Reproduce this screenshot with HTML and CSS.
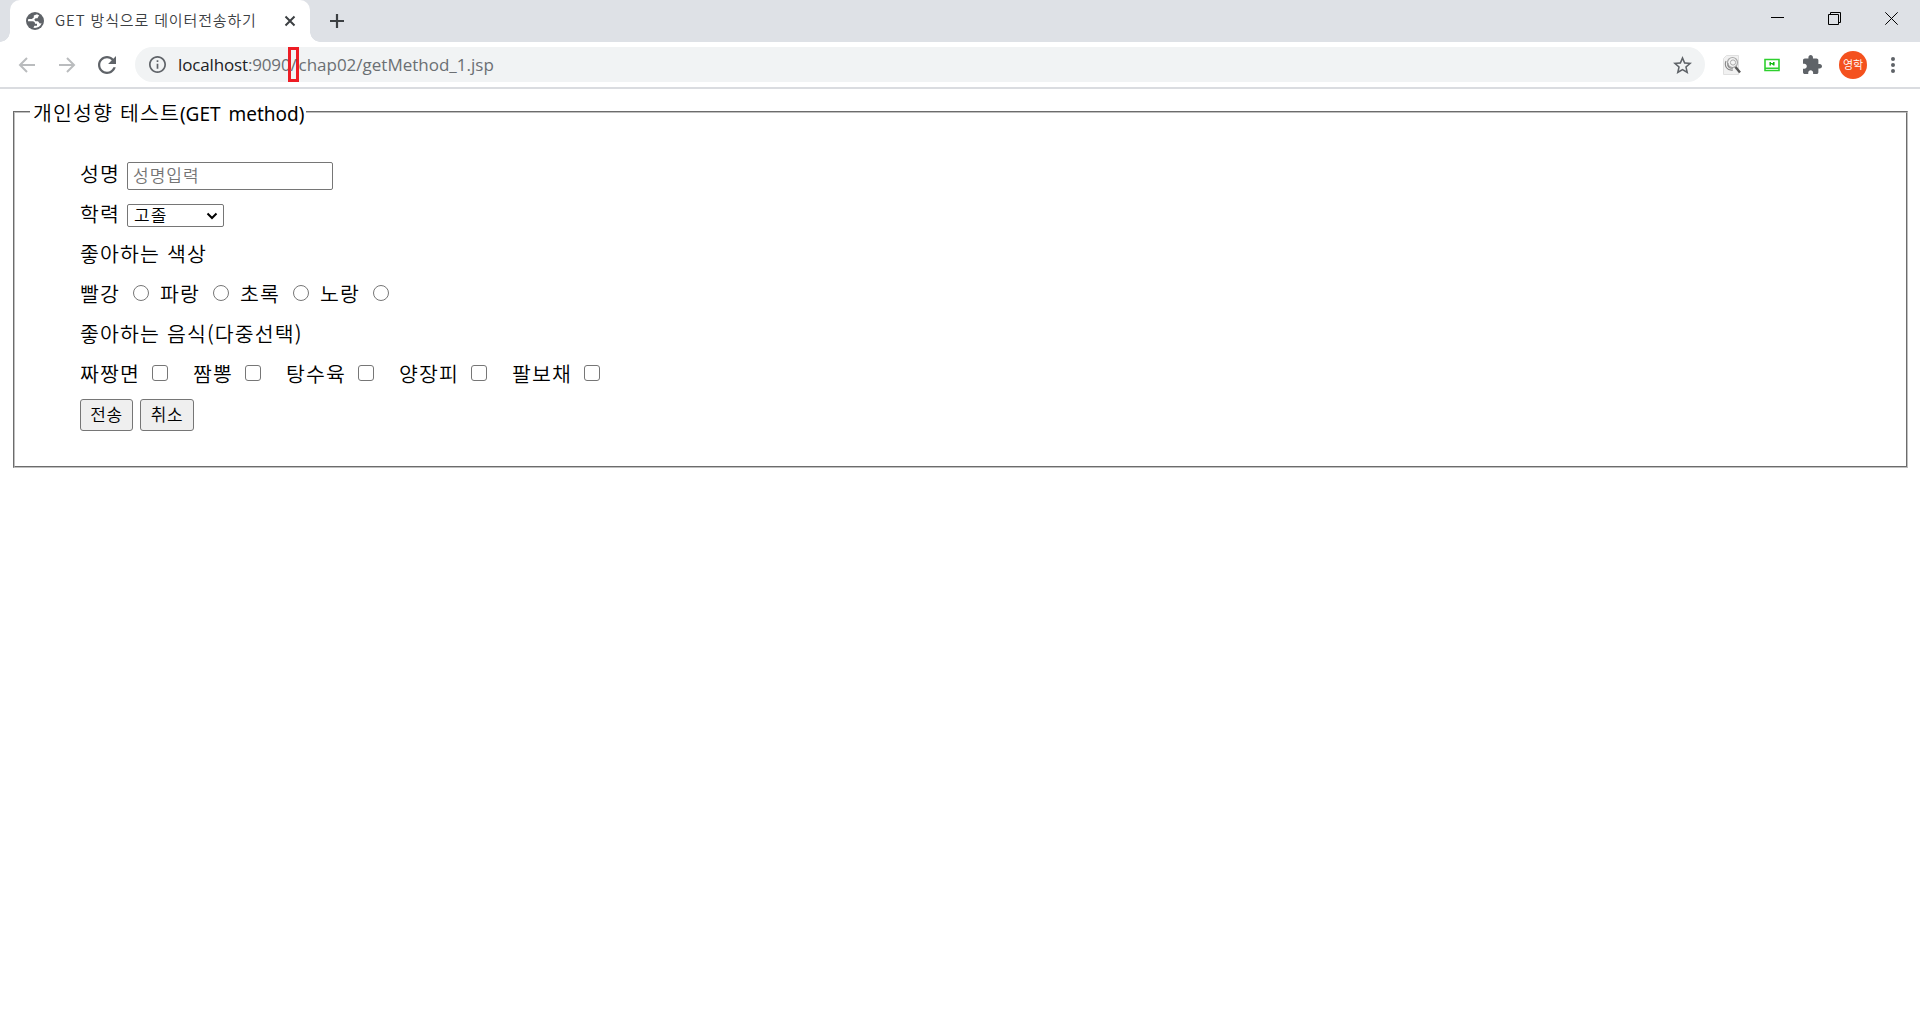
FILE: index.html
```html
<!DOCTYPE html>
<html lang="ko">
<head>
<meta charset="utf-8">
<title>GET 방식으로 데이터전송하기</title>
<link rel="stylesheet" href="styles.css">
</head>
<body>
<header class="browser">
  <div class="tabstrip">
    <div class="tab">
      <svg class="globe" width="18" height="18" viewBox="0 0 18 18"><circle cx="9" cy="9" r="9" fill="#5f6368"/><path fill="#fff" d="M11 2.300L7.800 3.600V5.500L5.800 7H2.300C2 8 2 8.600 2 9.200h4.500c1.800 0 2.500 1 2.500 2.600h2v2H8.400l-1 2c3.700.7 7-1.200 8.200-4.500l-1.800.2-1.800-2.300H9.500L8.300 7.700l1.200-1.400h2l.7-1.600 1-1.300z"/></svg>
      <span class="tab-title">GET 방식으로 데이터전송하기</span>
      <svg class="tab-close" width="12" height="12" viewBox="0 0 12 12"><path d="M1.500 1.500l9 9m0-9l-9 9" stroke="#3c4043" stroke-width="2"/></svg>
    </div>
    <svg class="new-tab" width="16" height="16" viewBox="0 0 16 16"><path d="M8 1v14M1 8h14" stroke="#3c4043" stroke-width="2.200"/></svg>
    <div class="window-controls">
      <svg width="13" height="13" viewBox="0 0 13 13"><path d="M0 5.500h13" stroke="#000"/></svg>
      <svg width="13" height="13" viewBox="0 0 13 13"><path d="M.5 2.500h10v10H.500zM2.500 2.500v-2h10v10h-2" fill="none" stroke="#000"/></svg>
      <svg width="13" height="13" viewBox="0 0 13 13"><path d="M.3.300l12.400 12.400m0-12.400L.3 12.700" stroke="#000"/></svg>
    </div>
  </div>
  <div class="toolbar">
    <svg class="nav" width="18" height="18" viewBox="0 0 18 18"><path d="M17 9H2m7-7L2 9l7 7" fill="none" stroke="#babcbe" stroke-width="2"/></svg>
    <svg class="nav" width="18" height="18" viewBox="0 0 18 18"><path d="M1 9h15M9 2l7 7-7 7" fill="none" stroke="#babcbe" stroke-width="2"/></svg>
    <svg class="nav" width="18" height="18" viewBox="4 4 16 16"><path fill="#5f6368" d="M17.650 6.350C16.200 4.900 14.210 4 12 4c-4.420 0-7.990 3.580-7.990 8s3.570 8 7.990 8c3.730 0 6.840-2.550 7.730-6h-2.080c-.82 2.330-3.040 4-5.650 4-3.310 0-6-2.690-6-6s2.690-6 6-6c1.660 0 3.140.69 4.220 1.780L13 11h7V4l-2.350 2.350z"/></svg>
    <div class="omnibox">
      <svg width="17" height="17" viewBox="2 2 20 20"><path fill="#5f6368" d="M11 7h2v2h-2zm0 4h2v6h-2zm1-9C6.480 2 2 6.480 2 12s4.480 10 10 10 10-4.480 10-10S17.520 2 12 2zm0 18c-4.410 0-8-3.590-8-8s3.590-8 8-8 8 3.590 8 8-3.590 8-8 8z"/></svg>
      <div class="url"><span class="host">localhost</span>:9090<span class="mark">/</span><span class="path">chap02/getMethod_1.jsp</span></div>
      <svg class="star" width="19" height="18" viewBox="2 2 20 19"><path fill="#5f6368" d="M22 9.240l-7.190-.62L12 2 9.190 8.630 2 9.240l5.460 4.730L5.820 21 12 17.270 18.180 21l-1.630-7.030L22 9.240zM12 15.400l-3.760 2.270 1-4.280-3.320-2.880 4.380-.38L12 6.100l1.710 4.040 4.380.38-3.320 2.880 1 4.280L12 15.400z"/></svg>
    </div>
    <div class="extensions">
      <svg width="20" height="20" viewBox="0 0 20 20"><path d="M4.500.500h12v19h-15V3.500z" fill="#f1f1f1" stroke="#e0e0e0"/><circle cx="10.500" cy="7.500" r="5" fill="#f4f4f4" stroke="#aaa" stroke-width="1.200"/><circle cx="11" cy="7.500" r="2.600" fill="none" stroke="#aaa"/><path d="M4 6c-2 5 1 10 7 9M6 8c-1 4 2 6 5 5" fill="none" stroke="#888" stroke-width="1.100"/><path d="M13.500 12l4.500 5.500" stroke="#555" stroke-width="2.400"/></svg>
      <svg width="16" height="14" viewBox="0 0 16 14"><path d="M1 1.500h14v11H1zM1 10.200h14" fill="#fff" stroke="#2fd02f" stroke-width="1.600"/><path d="M6.200 7.500V4m3.600 3.500V4m-3.600.7l3.600 2" fill="none" stroke="#0bb80b" stroke-width="1.500"/></svg>
      <svg width="19" height="19" viewBox="2 1 21 21"><path fill="#5f6368" d="M20.500 11H19V7c0-1.100-.9-2-2-2h-4V3.500C13 2.120 11.880 1 10.500 1S8 2.120 8 3.500V5H4c-1.100 0-1.990.9-1.990 2v3.800H3.500c1.490 0 2.700 1.210 2.700 2.700s-1.210 2.700-2.700 2.700H2V20c0 1.100.9 2 2 2h3.800v-1.500c0-1.490 1.210-2.700 2.700-2.700s2.700 1.210 2.700 2.700V22H17c1.100 0 2-.9 2-2v-4h1.500c1.380 0 2.500-1.120 2.500-2.500S21.880 11 20.500 11z"/></svg>
      <span class="avatar">영학</span>
      <svg width="4" height="16" viewBox="0 0 4 16" fill="#5f6368"><circle cx="2" cy="2" r="2"/><circle cx="2" cy="8" r="2"/><circle cx="2" cy="14" r="2"/></svg>
    </div>
  </div>
</header>
<main>
  <form>
    <fieldset>
      <legend>개인성향 테스트<span class="latin">(GET method)</span></legend>
      <div class="row"><label for="name">성명</label><input class="name" id="name" type="text" placeholder="성명입력"></div>
      <div class="row"><label for="school">학력</label><span class="select-wrap"><select id="school"><option>고졸</option></select><svg class="chevron" width="12" height="8" viewBox="0 0 12 8"><path d="M1.500 1.500L6 6l4.500-4.500" fill="none" stroke="#000" stroke-width="2"/></svg></span></div>
      <div class="row">좋아하는 색상</div>
      <div class="row colors">
        <label>빨강<input type="radio" name="color"></label>
        <label>파랑<input type="radio" name="color"></label>
        <label>초록<input type="radio" name="color"></label>
        <label>노랑<input type="radio" name="color"></label>
      </div>
      <div class="row">좋아하는 음식(다중선택)</div>
      <div class="row foods">
        <label>짜짱면<input type="checkbox"></label>
        <label>짬뽕<input type="checkbox"></label>
        <label>탕수육<input type="checkbox"></label>
        <label>양장피<input type="checkbox"></label>
        <label>팔보채<input type="checkbox"></label>
      </div>
      <div class="row buttons"><button type="submit">전송</button><button type="reset">취소</button></div>
    </fieldset>
  </form>
</main>
</body>
</html>
```
FILE: styles.css
```css
* { box-sizing: border-box; }
body {
  margin: 0;
  background: #fff;
  color: #000;
  font-family: "Noto Sans CJK KR", sans-serif;
  font-weight: 350;
}
svg { display: block; flex: none; }

.tabstrip {
  display: flex;
  height: 42px;
  padding-left: 10px;
  background: #dee1e6;
}
.tab {
  position: relative;
  display: flex;
  align-items: center;
  width: 300px;
  padding: 0 14px 0 16px;
  background: #fff;
  border-radius: 10px 10px 0 0;
}
.tab::before,
.tab::after {
  content: "";
  position: absolute;
  bottom: 0;
  width: 10px;
  height: 10px;
}
.tab::before { left: -10px; background: radial-gradient(circle at 0 0, #dee1e6 9.5px, #fff 10px); }
.tab::after { right: -10px; background: radial-gradient(circle at 100% 0, #dee1e6 9.5px, #fff 10px); }
.tab-title {
  flex: 1;
  margin: -2px 0 0 11px;
  font-size: 15px;
  letter-spacing: 0.85px;
  line-height: 20px;
  white-space: nowrap;
  color: #3c4043;
}
.new-tab { margin: 13px 0 0 19px; }
.window-controls {
  display: flex;
  gap: 44px;
  margin: 12px 22px 0 auto;
}

.toolbar {
  display: flex;
  align-items: center;
  height: 47px;
  padding: 0 25px 0 18px;
  border-bottom: 2px solid #dadce0;
}
.nav { margin-right: 22px; }
.omnibox {
  display: flex;
  align-items: center;
  flex: 1;
  height: 35px;
  margin-left: -3px;
  padding: 0 13px 0 14px;
  border-radius: 18px;
  background: #f1f3f4;
}
.url {
  display: flex;
  align-items: center;
  margin-left: 12px;
  font: 400 17px "Open Sans", sans-serif;
  letter-spacing: -0.15px;
  color: #6b6f73;
}
.host { color: #202124; }
.path { letter-spacing: 0; }
.mark {
  width: 11px;
  height: 35px;
  margin: 0 -1px 0 -2px;
  border: 3px solid #ed1c24;
  line-height: 29px;
  text-indent: -1px;
}
.star { margin-left: auto; }
.extensions {
  display: flex;
  align-items: center;
  margin-left: 17px;
}
.extensions > :nth-child(2) { margin-left: 22px; }
.extensions > :nth-child(3) { margin-left: 23px; }
.avatar {
  width: 28px;
  height: 28px;
  margin: 0 24px 0 17px;
  border-radius: 50%;
  background: #f4511e;
  color: #fff;
  font-size: 11px;
  line-height: 27px;
  text-align: center;
}

main { padding: 9px 12px 0 13px; }
fieldset {
  height: 370px;
  margin: 0;
  padding: 27px 0 0 65px;
  border: 2px groove #c0c0c0;
  font-size: 20.5px;
  letter-spacing: 1.14px;
}
legend {
  margin-left: -50px;
  padding: 2px 2px 0 3px;
  line-height: 24px;
}
.latin { font-family: "Noto Sans", sans-serif; font-weight: 400; font-size: 19px; letter-spacing: 0; word-spacing: 3px; }
.row { display: flex; align-items: center; height: 40px; line-height: 40px; white-space: pre; }
.row > label[for] { width: 47px; }
.name {
  width: 206px;
  height: 28px;
  margin: 6px 0 0;
  padding: 0 0 3px 5px;
  border: 1px solid #767676;
  border-radius: 2px;
  font: inherit;
  font-size: 17px;
  letter-spacing: 1px;
}
.name::placeholder { color: #757575; }
.select-wrap { position: relative; display: flex; margin-top: 5px; }
select {
  appearance: none;
  width: 97px;
  height: 23px;
  padding: 0 0 2px 6px;
  border: 1px solid #767676;
  border-radius: 2px;
  background: #fff;
  color: #000;
  font: inherit;
  font-size: 17px;
  line-height: 19px;
  letter-spacing: 1px;
}
.chevron { position: absolute; right: 6px; top: 8px; }
.colors, .foods { white-space: normal; }
.colors label, .foods label { display: flex; align-items: center; }
.colors label { width: 80px; }
.foods label { width: 113px; }
.foods label:nth-child(2) { width: 93px; }
input[type="radio"], input[type="checkbox"] {
  appearance: none;
  width: 16px;
  height: 16px;
  margin: 0 0 0 13px;
  border: 1px solid #767676;
  border-radius: 50%;
  background: #fff;
}
input[type="checkbox"] { margin-left: 12px; border-radius: 3px; }
.buttons { gap: 7px; }
button {
  width: 53px;
  height: 32px;
  margin-top: 3px;
  padding: 0 0 2px;
  border: 1px solid #767676;
  border-radius: 3px;
  background: #efefef;
  color: #000;
  font: inherit;
  font-size: 17px;
  line-height: 28px;
  letter-spacing: 0.5px;
}
button + button { width: 54px; }
```
